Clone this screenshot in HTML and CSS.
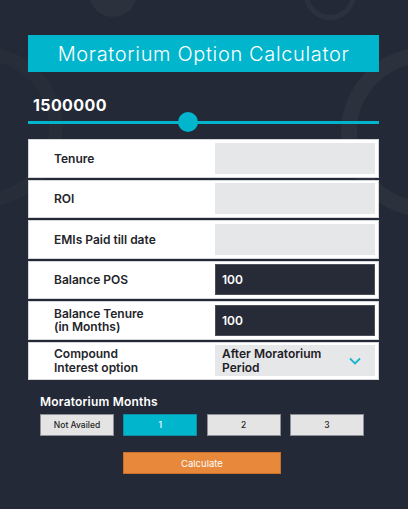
FILE: index.html
```html
<!DOCTYPE html>
<html>
<head>
<meta charset="utf-8">
<link rel="stylesheet" href="styles.css">
</head>
<body>
<div class="page">
  <div class="deco deco-dot"></div>
  <div class="deco deco-ring-top"></div>
  <div class="deco deco-ring-left"></div>
  <div class="deco deco-ring-right"></div>

  <div class="content">
    <h1 class="title">Moratorium Option Calculator</h1>
    <div class="amount">1500000</div>
    <div class="slider">
      <div class="track"></div>
      <div class="thumb"></div>
    </div>

    <div class="rows">
      <div class="row"><div class="label">Tenure</div><div class="field"></div></div>
      <div class="row"><div class="label">ROI</div><div class="field"></div></div>
      <div class="row"><div class="label">EMIs Paid till date</div><div class="field"></div></div>
      <div class="row"><div class="label">Balance POS</div><div class="field dark">100</div></div>
      <div class="row"><div class="label">Balance Tenure<br>(in Months)</div><div class="field dark">100</div></div>
      <div class="row"><div class="label">Compound<br>Interest option</div>
        <div class="field select"><span>After Moratorium<br>Period</span>
          <svg class="chev" width="12" height="8" viewBox="0 0 12 8"><path d="M1 1.5 L6 6.5 L11 1.5" fill="none" stroke="#19b5cc" stroke-width="1.8"/></svg>
        </div>
      </div>
    </div>

    <div class="months">
      <div class="months-label">Moratorium Months</div>
      <div class="btn-grid">
        <div class="opt">Not Availed</div>
        <div class="opt active">1</div>
        <div class="opt">2</div>
        <div class="opt">3</div>
        <div class="calc">Calculate</div>
      </div>
    </div>
  </div>
</div>
</body>
</html>
```
FILE: styles.css
```css
* { box-sizing: border-box; }
html, body { margin: 0; padding: 0; }
body {
  background: #232936;
  font-family: Inter, "Open Sans", sans-serif;
}
.page {
  position: relative;
  width: 408px;
  height: 509px;
  overflow: hidden;
  background: #232936;
}
.deco { position: absolute; border-radius: 50%; }
.deco-dot {
  left: 89px; top: -31px; width: 48px; height: 48px;
  background: #2b313d;
}
.deco-ring-top {
  left: 304px; top: -32px; width: 52px; height: 52px;
  border: 5px solid #2b313d;
}
.deco-ring-left {
  left: -97px; top: 47px; width: 160px; height: 160px;
  border: 14px solid #272d39;
}
.deco-ring-right {
  left: 341px; top: 47px; width: 170px; height: 170px;
  border: 16px solid #2b313d;
}
.content {
  position: relative;
  padding: 35px 29px 0 28px;
}
.title {
  margin: 0;
  height: 37px;
  background: #00b5cc;
  color: #fff;
  font-weight: 300;
  font-size: 20px;
  letter-spacing: 0.65px;
  display: flex;
  align-items: center;
  justify-content: center;
}
.amount {
  margin-top: 23px;
  padding-left: 5px;
  color: #fff;
  font-weight: 700;
  font-size: 16px;
  line-height: 20px;
  letter-spacing: 0.4px;
}
.slider {
  position: relative;
  height: 20px;
  margin-top: -3px;
  display: flex;
  align-items: center;
}
.track {
  width: 100%;
  height: 3px;
  background: #00b5cc;
}
.thumb {
  position: absolute;
  left: 150px;
  top: 0;
  width: 20px;
  height: 20px;
  border-radius: 50%;
  background: #00b5cc;
}
.rows {
  margin-top: 7px;
  display: flex;
  flex-direction: column;
  gap: 2px;
}
.row {
  height: 38.5px;
  background: #fff;
  border: 1px solid #d4d6da;
  display: flex;
  align-items: center;
  justify-content: space-between;
  padding: 0 3px 0 25px;
}
.label {
  font-size: 12px;
  font-weight: 600;
  color: #23252b;
  line-height: 13.5px;
}
.field {
  width: 160px;
  height: 31px;
  background: #e6e7e9;
  display: flex;
  align-items: center;
  padding-left: 7px;
  font-size: 12px;
  font-weight: 600;
  line-height: 13.5px;
}
.field.dark {
  background: #272b38;
  border: 1px solid #4a4f5a;
  color: #fff;
  padding-left: 6px;
}
.field.select {
  color: #1e2026;
  justify-content: space-between;
  padding-right: 14px;
}
.chev { display: block; }
.months {
  padding: 15px 14px 0 12px;
}
.months-label {
  color: #fff;
  font-size: 12px;
  font-weight: 600;
  line-height: 14px;
  letter-spacing: 0.2px;
}
.btn-grid {
  margin-top: 5px;
  display: grid;
  grid-template-columns: repeat(4, 74px);
  column-gap: 9.3px;
  row-gap: 16px;
}
.opt {
  height: 22px;
  background: #e4e4e4;
  border: 1px solid #8d9098;
  display: flex;
  align-items: center;
  justify-content: center;
  font-size: 8.5px;
  font-weight: 500;
  color: #1e1f24;
}
.opt.active {
  background: #00b5cc;
  border-color: #0a8ea3;
  color: #fff;
}
.calc {
  grid-column: 2 / 4;
  height: 22px;
  background: #e8883a;
  border: 1px solid #c9702a;
  color: #fff;
  font-size: 9.5px;
  display: flex;
  align-items: center;
  justify-content: center;
}
```
